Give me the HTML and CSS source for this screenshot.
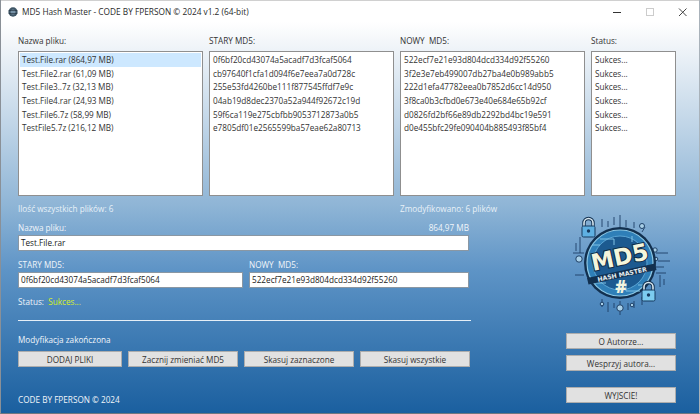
FILE: index.html
```html
<!DOCTYPE html>
<html lang="pl">
<head>
<meta charset="utf-8">
<title>MD5 Hash Master</title>
<link rel="stylesheet" href="styles.css">
</head>
<body>
<div class="window">
  <header class="titlebar">
    <svg class="app-icon" width="10" height="10" viewBox="0 0 14 14"><circle cx="7" cy="7" r="6.5" fill="#3f5666"/><circle cx="7" cy="7" r="3.500" fill="#7c98ad"/><path d="M1 5h12M1 9h12" stroke="#22323e" stroke-width="1"/></svg>
    <span class="title">MD5 Hash Master - CODE BY FPERSON © 2024 v1.2 (64-bit)</span>
    <div class="controls">
      <svg width="10" height="10" viewBox="0 0 10 10"><path d="M1 5.500h8" stroke="#333" stroke-width="1"/></svg>
      <svg width="10" height="10" viewBox="0 0 10 10"><rect x="1.500" y="1.500" width="7" height="7" fill="none" stroke="#ccc"/></svg>
      <svg width="10" height="10" viewBox="0 0 10 10"><path d="M1 1.500l7.500 7.500M8.500 1.500l-7.500 7.500" stroke="#444" stroke-width="1"/></svg>
    </div>
  </header>
  <main class="content">
    <section class="lists">
      <div class="col col-a">
        <label class="lbl dark">Nazwa pliku:</label>
        <ul class="listbox">
          <li class="selected">Test.File.rar (864,97 MB)</li>
          <li>Test.File2.rar (61,09 MB)</li>
          <li>Test.File3..7z (32,13 MB)</li>
          <li>Test.File4.rar (24,93 MB)</li>
          <li>Test.File6.7z (58,99 MB)</li>
          <li>TestFile5.7z (216,12 MB)</li>
        </ul>
      </div>
      <div class="col col-a">
        <label class="lbl dark">STARY MD5:</label>
        <ul class="listbox">
          <li>0f6bf20cd43074a5acadf7d3fcaf5064</li>
          <li>cb97640f1cfa1d094f6e7eea7a0d728c</li>
          <li>255e53fd4260be111f877545ffdf7e9c</li>
          <li>04ab19d8dec2370a52a944f92672c19d</li>
          <li>59f6ca119e275cbfbb9053712873a0b5</li>
          <li>e7805df01e2565599ba57eae62a80713</li>
        </ul>
      </div>
      <div class="col col-a">
        <label class="lbl dark">NOWY&nbsp; MD5:</label>
        <ul class="listbox">
          <li>522ecf7e21e93d804dcd334d92f55260</li>
          <li>3f2e3e7eb499007db27ba4e0b989abb5</li>
          <li>222d1efa47782eea0b7852d6cc14d950</li>
          <li>3f8ca0b3cfbd0e673e40e684e65b92cf</li>
          <li>d0826fd2bf66e89db2292bd4bc19e591</li>
          <li>d0e455bfc29fe090404b885493f85bf4</li>
        </ul>
      </div>
      <div class="col col-b">
        <label class="lbl dark">Status:</label>
        <ul class="listbox">
          <li>Sukces...</li>
          <li>Sukces...</li>
          <li>Sukces...</li>
          <li>Sukces...</li>
          <li>Sukces...</li>
          <li>Sukces...</li>
        </ul>
      </div>
    </section>
    <section class="lower">
      <div class="left">
        <div class="counts">
          <span class="count-a">Ilość wszystkich plików: 6</span>
          <span class="count-b">Zmodyfikowano: 6 plików</span>
        </div>
        <div class="name-head"><span>Nazwa pliku:</span><span>864,97 MB</span></div>
        <div class="field">Test.File.rar</div>
        <div class="md5-row">
          <div class="md5-col"><span class="lbl">STARY MD5:</span><div class="field">0f6bf20cd43074a5acadf7d3fcaf5064</div></div>
          <div class="md5-col"><span class="lbl">NOWY&nbsp; MD5:</span><div class="field">522ecf7e21e93d804dcd334d92f55260</div></div>
        </div>
        <div class="status">Status:&nbsp; <span class="ok">Sukces...</span></div>
        <hr class="rule">
        <div class="message">Modyfikacja zakończona</div>
        <div class="actions">
          <button class="btn b1">DODAJ PLIKI</button>
          <button class="btn b2">Zacznij zmieniać MD5</button>
          <button class="btn b3">Skasuj zaznaczone</button>
          <button class="btn b4">Skasuj wszystkie</button>
        </div>
        <div class="footer">CODE BY FPERSON © 2024</div>
      </div>
      <aside class="right">
        <svg class="logo" width="100" height="102" viewBox="0 0 100 102">
          <g fill="none" stroke="#1d3f66" stroke-width=".9">
            <path d="M30 12V4M36 12V6M42 10V2M48 12V0M54 12V5M62 13V7M70 17l3-5"/>
            <path d="M30 84V92M36 87V97M42 88V93M48 86V100M56 88V95M62 86V93M70 82V90"/>
            <path d="M12 38H1M10 44H4M12 60H3M84 38H96M86 46H98M84 58H94M84 52H92"/>
            <path d="M8 22V38M4 28V36M88 60V72M92 64V70"/>
          </g>
          <g fill="#a9d0e8" stroke="#1d3f66" stroke-width="1">
            <circle cx="70" cy="11" r="2.500"/><circle cx="7" cy="44" r="3.200"/><circle cx="83" cy="35" r="2.200"/><circle cx="48" cy="93" r="3.200"/><circle cx="30" cy="89" r="1.800"/><circle cx="60" cy="90" r="1.800"/><circle cx="84" cy="44" r="1.800"/>
          </g>
          <circle cx="48" cy="48" r="36" fill="#12304f"/>
          <circle cx="48" cy="48" r="33" fill="#2f7fb8" stroke="#8cc8e6" stroke-width="1.200"/>
          <circle cx="48" cy="48" r="27" fill="#1c5a90" stroke="#5ba5d4" stroke-width="1"/>
          <path d="M28 24h14v6M68 76H54v-8M22 68h12M60 21v6M20 30h8M74 70h-8" fill="none" stroke="#7fc1e4" stroke-width="1"/>
          <text class="logo-md5" x="48" y="50" transform="rotate(-12 48 44)" text-anchor="middle">MD5</text>
          <path d="M15 63l68-14.500 1.500 6.500-68 14.500z" fill="#12304f"/>
          <text class="logo-sub" x="50" y="61.500" transform="rotate(-12 50 59)" text-anchor="middle">HASH MASTER</text>
          <text class="logo-hash" x="49" y="78" text-anchor="middle">#</text>
          <g>
            <path d="M12 11V8a4.500 4.500 0 0 1 9 0v3" fill="none" stroke="#12304f" stroke-width="3.400"/>
            <path d="M12 11V8a4.500 4.500 0 0 1 9 0v3" fill="none" stroke="#d8e6ee" stroke-width="1.600"/>
            <rect x="10" y="11" width="13" height="11" rx="1.500" fill="#5fb0e2" stroke="#173a5f"/>
            <circle cx="16.500" cy="16" r="1.700" fill="#173a5f"/>
          </g>
          <g>
            <path d="M72 75v-3a4.500 4.500 0 0 1 9 0v3" fill="none" stroke="#12304f" stroke-width="3.400"/>
            <path d="M72 75v-3a4.500 4.500 0 0 1 9 0v3" fill="none" stroke="#d8e6ee" stroke-width="1.600"/>
            <rect x="70" y="75" width="13" height="11" rx="1.500" fill="#7cccf0" stroke="#173a5f"/>
            <circle cx="76.500" cy="80" r="1.700" fill="#173a5f"/>
          </g>
        </svg>
        <button class="btn side first">O Autorze...</button>
        <button class="btn side">Wesprzyj autora...</button>
        <button class="btn side exit">WYJSCIE!</button>
      </aside>
    </section>
  </main>
</div>
</body>
</html>
```

FILE: styles.css
```css
* { box-sizing: border-box; }
html, body { margin: 0; padding: 0; }
body {
  width: 700px;
  height: 414px;
  overflow: hidden;
  font-family: "Open Sans", "Noto Sans", sans-serif;
  font-size: 8.2px;
  color: #222;
}
.window {
  width: 700px;
  height: 414px;
  display: flex;
  flex-direction: column;
  border-left: 1px solid #8a9097;
  border-right: 1px solid #a9b2ba;
  border-bottom: 1px solid #6f7780;
  background: linear-gradient(#ffffff 22px, #f4f7fa 40px, #8fb5d6 205px, #5e94c6 270px, #1a5f9f 414px);
}
.titlebar {
  height: 22px;
  flex: none;
  display: flex;
  align-items: center;
  padding: 0 11px 0 7px;
  gap: 4px;
  background: #fff;
  border-top: 1px solid #d0d0d0;
}
.title { font-size: 8.3px; color: #2a2a2a; }
.controls { margin-left: auto; display: flex; gap: 23px; }
.content { flex: 1; padding: 12px 23px 0 17px; display: flex; flex-direction: column; }
.lists { display: flex; gap: 6px; height: 162px; flex: none; }
.col { display: flex; flex-direction: column; }
.col-a { width: 185px; }
.col-b { width: 85px; }
.lbl { display: block; height: 17px; line-height: 13px; color: #f0f5fa; }
.lbl.dark { color: #333; }
.listbox {
  list-style: none;
  margin: 0;
  padding: 1px;
  height: 145px;
  background: #fff;
  border: 1px solid #8f8f8f;
}
.listbox li { height: 13.7px; line-height: 13.7px; padding-left: 2px; white-space: nowrap; overflow: hidden; color: #333; }
.listbox li.selected { background: #cde8ff; }
.lower { display: flex; flex: 1; }
.left { width: 453px; display: flex; flex-direction: column; color: #f0f5fa; }
.counts { display: flex; height: 13px; margin-top: 6px; line-height: 13px; color: #e8f1f8; white-space: nowrap; font-weight: 500; }
.count-a { width: 382px; flex: none; }
.count-b { flex: none; }
.name-head { display: flex; justify-content: space-between; width: 451px; margin-top: 6px; height: 14px; line-height: 13px; }
.field {
  height: 16px;
  width: 451px;
  background: #fff;
  border: 1px solid #8a97a3;
  padding-left: 2px;
  line-height: 14px;
  color: #222;
}
.md5-row { display: flex; gap: 6px; margin-top: 7px; width: 451px; }
.md5-col { width: 225px; }
.md5-col + .md5-col { width: 220px; }
.md5-col .field { width: 100%; }
.md5-col .lbl { height: 14px; }
.status { margin-top: 7px; height: 13px; line-height: 13px; }
.ok { color: #d6ee2a; }
.rule { width: 453px; height: 1px; margin: 12px 0 0; border: 0; background: #e6eff7; }
.message { margin-top: 12px; height: 13px; line-height: 13px; }
.actions { display: flex; gap: 6px; margin-top: 5px; width: 452px; }
.btn {
  height: 16px;
  padding: 0;
  font: inherit;
  color: #333;
  background: #e1e1e1;
  border: 1px solid #adadad;
}
.b1 { width: 104px; }
.b2 { width: 110px; }
.b3 { width: 110px; }
.b4 { width: 110px; }
.footer { margin-top: 26px; height: 13px; line-height: 13px; }
.right { flex: 1; display: flex; flex-direction: column; align-items: flex-end; }
.logo { margin: 19px 4px 0 0; flex: none; }
.side { width: 110px; height: 16px; }
.first { margin-top: 16px; }
.side + .side { margin-top: 6px; }
.side.exit { margin-top: 16px; }
.logo-md5 { font: 700 23px "DejaVu Sans", sans-serif; fill: #f4f6dc; stroke: #0f2a47; stroke-width: 2px; paint-order: stroke; }
.logo-sub { font: 700 6.200px "DejaVu Sans", sans-serif; fill: #e4eef2; }
.logo-hash { font: 800 17px "Open Sans", sans-serif; fill: #f2f4e0; }
```
